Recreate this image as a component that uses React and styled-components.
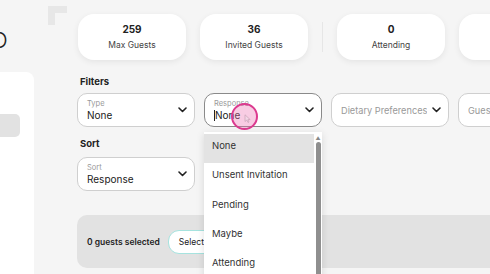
import styled, { createGlobalStyle } from 'styled-components';

const GlobalStyle = createGlobalStyle`
    html, body {
        margin: 0;
        padding: 0;
        background: #f5f5f5;
        font-family: Inter, "Liberation Sans", sans-serif;
        overflow: hidden;
    }
`

const stats = [
    { value: 259, label: 'Max Guests' },
    { value: 36, label: 'Invited Guests' },
    { value: 0, label: 'Attending', divided: true },
    { value: '', label: '' },
];

const options = ['None', 'Unsent Invitation', 'Pending', 'Maybe', 'Attending'];

const Chevron = () => (
    <svg width="9" height="6" viewBox="0 0 9 6">
        <path d="M1 1l3.5 3.5L8 1" fill="none" stroke="#222" strokeWidth="1.6" strokeLinecap="round" strokeLinejoin="round" />
    </svg>
);

const App = () => {
    return (
        <Page>
            <GlobalStyle />
            <Sidebar>
                <Logo>O</Logo>
                <SideCard>
                    <SideItem />
                </SideCard>
            </Sidebar>
            <IconCol>
                <svg width="19" height="19" viewBox="0 0 19 19">
                    <path d="M0 0H19V7H7V19H0Z" fill="#e7e7e7" />
                </svg>
            </IconCol>
            <Main>
                <StatsRow>
                    {stats.map((s, i) => (
                        <StatGroup key={i}>
                            {s.divided && <Divider />}
                            <StatCard>
                                <StatValue>{s.value}</StatValue>
                                <StatLabel>{s.label}</StatLabel>
                            </StatCard>
                        </StatGroup>
                    ))}
                </StatsRow>

                <SectionTitle>Filters</SectionTitle>
                <SelectRow>
                    <Select>
                        <SelectText>
                            <SelectLabel>Type</SelectLabel>
                            <SelectValue>None</SelectValue>
                        </SelectText>
                        <Chevron />
                    </Select>
                    <SelectWrap>
                        <Select focused>
                            <SelectText>
                                <SelectLabel>Response</SelectLabel>
                                <SelectValue><Caret />None</SelectValue>
                            </SelectText>
                            <Chevron />
                        </Select>
                        <Touch>
                            <svg width="7" height="9" viewBox="0 0 7 9">
                                <path d="M1 0.8V7.5L2.8 6L4 8.5L5 8L3.9 5.6H6.2Z" fill="#f3d6e6" stroke="#c9a2b6" strokeWidth="0.7" />
                            </svg>
                        </Touch>
                        <Menu>
                            <MenuList>
                                {options.map((o, i) => (
                                    <MenuItem key={o} active={i === 0}>{o}</MenuItem>
                                ))}
                            </MenuList>
                            <Scrollbar>
                                <ScrollArrow>▲</ScrollArrow>
                                <ScrollThumb />
                            </Scrollbar>
                        </Menu>
                    </SelectWrap>
                    <Select>
                        <Placeholder>Dietary Preferences</Placeholder>
                        <Chevron />
                    </Select>
                    <Select>
                        <Placeholder>Guest Group</Placeholder>
                        <Chevron />
                    </Select>
                </SelectRow>

                <SectionTitle sort>Sort</SectionTitle>
                <SelectRow>
                    <Select>
                        <SelectText>
                            <SelectLabel>Sort</SelectLabel>
                            <SelectValue>Response</SelectValue>
                        </SelectText>
                        <Chevron />
                    </Select>
                </SelectRow>

                <ActionBar>
                    <Selected>0 guests selected</Selected>
                    <PillButton>Select All</PillButton>
                </ActionBar>
            </Main>
        </Page>
    );
};

const Page = styled.div`
    display: flex;
    width: 490px;
    height: 274px;
    overflow: hidden;
`

const Sidebar = styled.div`
    width: 34px;
    flex-shrink: 0;
    display: flex;
    flex-direction: column;
`

const Logo = styled.div`
    height: 72px;
    margin-left: -9px;
    padding-top: 28px;
    box-sizing: border-box;
    font-size: 22px;
    font-weight: 300;
    color: #222;
    line-height: 24px;
`

const SideCard = styled.div`
    flex: 1;
    background: #fff;
    border-radius: 0 8px 0 0;
    padding-top: 42px;
`

const SideItem = styled.div`
    width: 20px;
    height: 23px;
    background: #e2e2e2;
    border-radius: 0 5px 5px 0;
`

const IconCol = styled.div`
    width: 43px;
    flex-shrink: 0;
    padding: 6px 0 0 14px;
    box-sizing: border-box;
`

const Main = styled.div`
    flex: 1;
    min-width: 0;
    padding-top: 14px;
    display: flex;
    flex-direction: column;
`

const StatsRow = styled.div`
    display: flex;
    gap: 14px;
    padding-left: 1px;
`

const StatGroup = styled.div`
    display: flex;
    align-items: center;
    gap: 14px;
    flex-shrink: 0;
`

const Divider = styled.div`
    width: 1px;
    height: 30px;
    background: #e6e6e6;
`

const StatCard = styled.div`
    width: 108px;
    height: 46px;
    background: #fff;
    border-radius: 16px;
    box-shadow: 0 2px 6px rgba(0, 0, 0, 0.07);
    display: flex;
    flex-direction: column;
    align-items: center;
    justify-content: center;
    gap: 5px;
`

const StatValue = styled.div`
    font-size: 10px;
    font-weight: 700;
    color: #222;
    line-height: 12px;
`

const StatLabel = styled.div`
    font-size: 8.5px;
    color: #444;
    line-height: 11px;
`

const SectionTitle = styled.div`
    font-size: 9.5px;
    font-weight: 700;
    color: #222;
    margin: ${(p) => (p.sort ? '11px 0 7px 3px' : '16px 0 5px 3px')};
    line-height: 12px;
`

const SelectRow = styled.div`
    display: flex;
    gap: 9px;
`

const SelectWrap = styled.div`
    position: relative;
    flex-shrink: 0;
`

const Select = styled.div`
    width: 118px;
    height: 34px;
    flex-shrink: 0;
    box-sizing: border-box;
    background: #fff;
    border: 1px solid ${(p) => (p.focused ? '#8a8a8a' : '#cfcfcf')};
    border-radius: 10px;
    display: flex;
    align-items: center;
    justify-content: space-between;
    gap: 4px;
    padding: 0 7px 0 9px;
`

const SelectText = styled.div`
    display: flex;
    flex-direction: column;
    gap: 1px;
`

const SelectLabel = styled.div`
    font-size: 7.5px;
    color: #999;
    line-height: 9px;
`

const SelectValue = styled.div`
    font-size: 10px;
    color: #222;
    line-height: 13px;
    display: flex;
    align-items: center;
`

const Caret = styled.span`
    width: 1px;
    height: 11px;
    background: #222;
`

const Placeholder = styled.div`
    font-size: 9.2px;
    color: #999;
    white-space: nowrap;
    overflow: hidden;
`

const Touch = styled.div`
    position: absolute;
    left: 27px;
    top: 10px;
    width: 27px;
    height: 27px;
    box-sizing: border-box;
    border-radius: 50%;
    border: 2px solid #dc3a8f;
    background: rgba(236, 110, 175, 0.35);
    display: flex;
    align-items: center;
    justify-content: center;
    padding: 4px 0 0 6px;
`

const Menu = styled.div`
    position: absolute;
    left: 0;
    top: 39px;
    width: 118px;
    height: 160px;
    padding-top: 2px;
    box-sizing: border-box;
    background: #fff;
    display: flex;
    box-shadow: 0 2px 8px rgba(0, 0, 0, 0.12);
`

const MenuList = styled.div`
    flex: 1;
`

const MenuItem = styled.div`
    height: 29.25px;
    box-sizing: border-box;
    padding: 6px 0 0 8px;
    line-height: 11px;
    font-size: 9.5px;
    color: #333;
    background: ${(p) => (p.active ? '#e3e3e3' : '#fff')};
`

const Scrollbar = styled.div`
    width: 8px;
    display: flex;
    flex-direction: column;
    align-items: center;
    background: #fff;
`

const ScrollArrow = styled.div`
    font-size: 5px;
    color: #888;
    line-height: 8px;
`

const ScrollThumb = styled.div`
    flex: 1;
    width: 5px;
    border-radius: 3px;
    background: #8f8f8f;
`

const ActionBar = styled.div`
    margin-top: 24px;
    height: 53px;
    background: #e2e2e2;
    border-radius: 10px 0 0 10px;
    display: flex;
    align-items: center;
    gap: 8px;
    padding-left: 10px;
`

const Selected = styled.div`
    font-size: 8.5px;
    font-weight: 600;
    color: #222;
    white-space: nowrap;
`

const PillButton = styled.div`
    height: 22px;
    padding: 0 10px;
    border-radius: 11px;
    background: #fff;
    border: 1px solid #a6e3df;
    display: flex;
    align-items: center;
    font-size: 8.5px;
    color: #222;
    white-space: nowrap;
`

export default App;
